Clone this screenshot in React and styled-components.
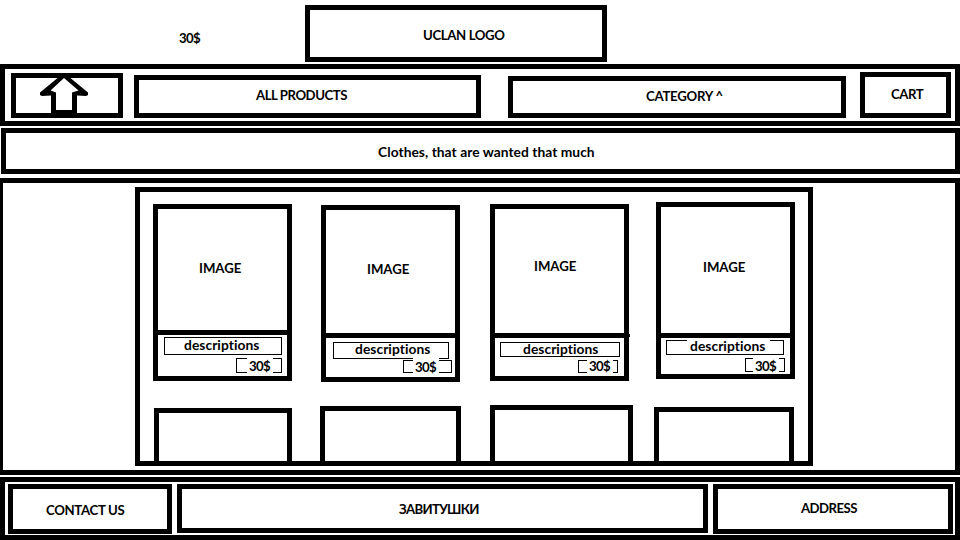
import React from "react";
import styled, { createGlobalStyle } from "styled-components";

const GlobalStyle = createGlobalStyle`
  *, *::before, *::after { box-sizing: border-box; }
  body { margin: 0; background: #fff; }
`;

const Page = styled.div`
  width: 960px;
  height: 540px;
  display: flex;
  flex-direction: column;
  overflow: hidden;
  background: #fff;
  color: #000;
  font: 700 13.2px/16px Lato, "Liberation Sans", sans-serif;
`;

const Label = styled.span`
  display: block;
  flex: none;
  white-space: nowrap;
  height: 16px;
  margin: ${(p) => p.$top || 0}px 0 0 ${(p) => p.$left || 0}px;
  letter-spacing: ${(p) => p.$track || 0}px;
`;

const Sentence = styled(Label)`
  font-size: 13.8px;
  font-variant-ligatures: none;
`;

const Header = styled.header`
  display: flex;
  height: 64px;
  flex: none;
`;

const HeaderPrice = styled.div`
  width: 305px;
`;

const Frame = styled.div`
  display: flex;
  align-items: flex-start;
  flex: none;
  border: 5px solid #000;
  width: ${(p) => p.$w}px;
  height: ${(p) => p.$h}px;
  margin: ${(p) => p.$top || 0}px 0 0 ${(p) => p.$left || 0}px;
`;

const Nav = styled.nav`
  display: flex;
  align-items: flex-end;
  flex: none;
  height: 62px;
  border: 5px solid #000;
  padding: 0 4px 3px 6px;
`;

const ArrowIcon = styled.svg`
  display: block;
  margin: -5px 0 0 23px;
  flex: none;
`;

const TitleBar = styled.div`
  display: flex;
  flex: none;
  height: 46px;
  margin: 2px 0 0 1px;
  border: 5px solid #000;
`;

const Main = styled.main`
  flex: none;
  height: 297px;
  margin-top: 4px;
  border: 5px solid #000;
  border-left-width: 3px;
  padding: 4px 0 0 132px;
`;

const Catalogue = styled.section`
  width: 678px;
  height: 279px;
  border: 5px solid #000;
  overflow: hidden;
`;

const Row = styled.div`
  display: flex;
  align-items: flex-start;
  height: ${(p) => p.$h}px;
`;

const Card = styled.article`
  display: flex;
  flex-direction: column;
  flex: none;
  width: 139px;
  height: 177px;
  border: 5px solid #000;
  margin: ${(p) => p.$top}px 0 0 ${(p) => p.$left}px;
`;

const Picture = styled.div`
  position: relative;
  flex: none;
  height: ${(p) => p.$h}px;
  border-bottom: 5px solid #000;
  display: flex;
  align-items: flex-start;

  &::after {
    content: "";
    display: ${(p) => (p.$nub ? "block" : "none")};
    position: absolute;
    right: -6px;
    bottom: -4px;
    width: 2px;
    height: 3px;
    background: #000;
  }
`;

const ThinBox = styled.div`
  display: flex;
  align-items: flex-start;
  flex: none;
  border: 1px solid #000;
  width: ${(p) => p.$w}px;
  height: ${(p) => p.$h}px;
  margin: ${(p) => p.$top}px 0 0 ${(p) => p.$left}px;
`;

const Patch = styled.div`
  flex: none;
  background: ${(p) => (p.$clear ? "transparent" : "#fff")};
  width: ${(p) => p.$w}px;
  height: ${(p) => p.$h}px;
  margin: ${(p) => p.$top}px 0 0 ${(p) => p.$left}px;
`;

const Footer = styled.footer`
  display: flex;
  align-items: flex-start;
  flex: none;
  height: 63px;
  margin-top: 2px;
  border: 5px solid #000;
  padding: 2px 0 0 3px;
`;

const cards = [
  {
    top: 12, left: 13, picture: 126, image: [41, 51],
    desc: { top: 2, left: 6, w: 118, h: 18, text: [19, -1] },
    price: { top: 3, left: 78, w: 46, h: 15, gap: 10, rise: -1, base: 0 },
  },
  {
    top: 13, left: 29, picture: 128, image: [41, 51],
    desc: { top: 4, left: 7, w: 116, h: 17, text: [21, -2] },
    price: { top: 1, left: 77, w: 49, h: 13, gap: 9, rise: -3, base: 1 },
  },
  {
    top: 12, left: 30, picture: 129, nub: true, image: [39, 49],
    desc: { top: 4, left: 5, w: 120, h: 15, text: [22, -2] },
    price: { top: 3, left: 83, w: 40, h: 13, gap: 8, rise: -2, base: -1 },
  },
  {
    top: 10, left: 27, picture: 131, image: [42, 52],
    desc: { top: 2, left: 5, w: 118, h: 15, text: [23, -3], open: true },
    price: { top: 3, left: 84, w: 40, h: 14, gap: 7, rise: -1, base: 0 },
  },
];

const nextCards = [
  { top: 8, left: 14, w: 138 },
  { top: 6, left: 28, w: 141 },
  { top: 5, left: 29, w: 143 },
  { top: 7, left: 21, w: 140 },
];

function Product({ top, left, picture, nub, image, desc, price }) {
  return (
    <Card $top={top} $left={left}>
      <Picture $h={picture} $nub={nub}>
        <Label $left={image[0]} $top={image[1]}>IMAGE</Label>
      </Picture>
      <ThinBox $top={desc.top} $left={desc.left} $w={desc.w} $h={desc.h}>
        <Patch
          $clear={!desc.open}
          $w={desc.open ? 83 : 80}
          $h={desc.open ? 14 : 16}
          $left={desc.open ? 20 : desc.text[0]}
          $top={-1}
        >
          <Sentence $left={desc.open ? 3 : 0} $top={desc.text[1] + 1} $track={0.06}>
            descriptions
          </Sentence>
        </Patch>
      </ThinBox>
      <ThinBox $top={price.top} $left={price.left} $w={price.w} $h={price.h}>
        <Patch $w={26} $h={16} $left={price.gap} $top={price.rise}>
          <Label $left={2} $top={price.base} $track={-0.6}>30$</Label>
        </Patch>
      </ThinBox>
    </Card>
  );
}

export default function App() {
  return (
    <>
      <GlobalStyle />
      <Page>
        <Header>
          <HeaderPrice><Label $top={30} $left={179} $track={-0.6}>30$</Label></HeaderPrice>
          <Frame $w={302} $h={57} $top={5}>
            <Label $left={113} $top={17} $track={-0.37}>UCLAN LOGO</Label>
          </Frame>
        </Header>
        <Nav>
          <Frame $w={112} $h={45}>
            <ArrowIcon width="50" height="44" viewBox="39 73 50 44">
              <path
                d="M64 74 L60 76 L40 92.5 V95 L42 96 L51 95.5 V115 H77 V95.5 L86 96 L88 95 V92.5 L68 76 Z"
                fill="#000"
              />
              <path
                d="M64 78 L50.5 90.5 L56 92.5 V110 H72 V92.5 L78.5 90.5 Z"
                fill="#fff"
              />
            </ArrowIcon>
          </Frame>
          <Frame $w={347} $h={43} $left={11}>
            <Label $left={117} $top={7} $track={-0.46}>ALL PRODUCTS</Label>
          </Frame>
          <Frame $w={338} $h={42} $left={27}>
            <Label $left={133} $top={7} $track={-0.25}>CATEGORY ^</Label>
          </Frame>
          <Frame $w={91} $h={46} $left={14}>
            <Label $left={26} $top={9} $track={-0.45}>CART</Label>
          </Frame>
        </Nav>
        <TitleBar>
          <Sentence $left={372} $top={11} $track={0.04}>Clothes, that are wanted that much</Sentence>
        </TitleBar>
        <Main>
          <Catalogue>
            <Row $h={208}>
              {cards.map((card, i) => <Product key={i} {...card} />)}
            </Row>
            <Row $h={61}>
              {nextCards.map((c, i) => (
                <Frame key={i} $w={c.w} $h={70} $top={c.top} $left={c.left} />
              ))}
            </Row>
          </Catalogue>
        </Main>
        <Footer>
          <Frame $w={164} $h={50}>
            <Label $left={33} $top={13} $track={-0.33}>CONTACT US</Label>
          </Frame>
          <Frame $w={531} $h={49} $left={5}>
            <Label $left={217} $top={12} $track={-0.65}>ЗАВИТУШКИ</Label>
          </Frame>
          <Frame $w={240} $h={50} $left={5}>
            <Label $left={83} $top={11} $track={-0.55}>ADDRESS</Label>
          </Frame>
        </Footer>
      </Page>
    </>
  );
}
